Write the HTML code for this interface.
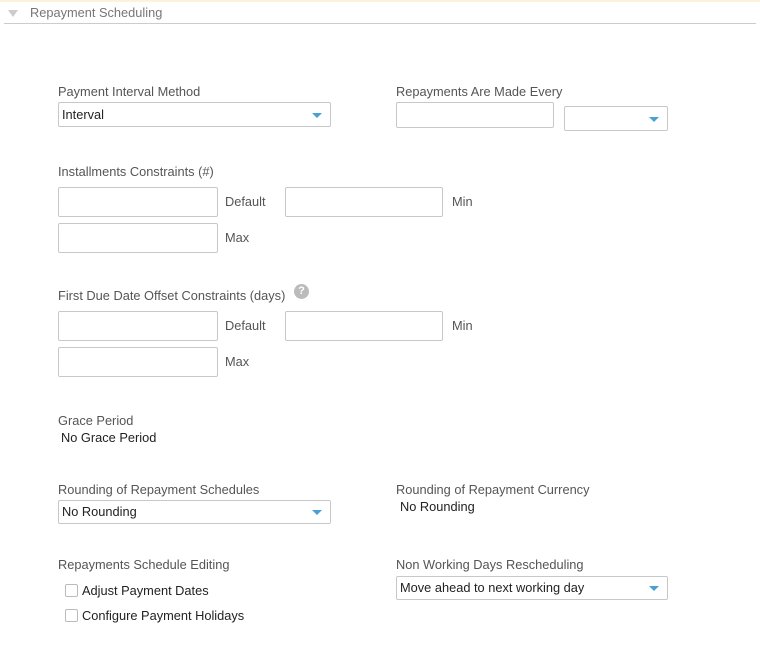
<!DOCTYPE html>
<html><head><meta charset="utf-8"><style>
*{box-sizing:border-box;margin:0;padding:0}
body{width:760px;height:649px;background:#fff;position:relative;overflow:hidden;font-family:"Liberation Sans",sans-serif;font-size:12.8px;color:#222}
.a{position:absolute;white-space:nowrap;line-height:16px}
.l{color:#555}
.b{position:absolute;border:1px solid #c8c8c8;border-radius:2px;background:#fff}
.s::after{content:"";position:absolute;right:8px;top:50%;margin-top:-2px;border-left:5px solid transparent;border-right:5px solid transparent;border-top:5px solid #4a9fd5}
.cb{position:absolute;width:13px;height:13px;border:1px solid #bbb;border-radius:2px;background:#fff}
</style></head><body>
<div style="position:absolute;left:0;top:0;width:760px;height:2px;background:#fdf3dc"></div>
<div style="position:absolute;left:8px;top:10px;border-left:5px solid transparent;border-right:5px solid transparent;border-top:7px solid #ccc"></div>
<div class="a" style="left:30px;top:5px;color:#777">Repayment Scheduling</div>
<div style="position:absolute;left:4px;top:23px;width:752px;height:1px;background:#ccc"></div>

<div class="a l" style="left:58px;top:84px">Payment Interval Method</div>
<div class="b s" style="left:58px;top:102px;width:273px;height:25px"></div>
<div class="a" style="left:62px;top:107px">Interval</div>

<div class="a l" style="left:396px;top:84px">Repayments Are Made Every</div>
<div class="b" style="left:396px;top:102px;width:158px;height:26px"></div>
<div class="b s" style="left:564px;top:106px;width:104px;height:25px"></div>

<div class="a l" style="left:58px;top:164px">Installments Constraints (#)</div>
<div class="b" style="left:58px;top:187px;width:160px;height:30px"></div>
<div class="a l" style="left:225px;top:194px">Default</div>
<div class="b" style="left:285px;top:187px;width:158px;height:30px"></div>
<div class="a l" style="left:452px;top:194px">Min</div>
<div class="b" style="left:58px;top:223px;width:160px;height:30px"></div>
<div class="a l" style="left:225px;top:230px">Max</div>

<div class="a l" style="left:58px;top:288px">First Due Date Offset Constraints (days)</div>
<div style="position:absolute;left:294px;top:284px;width:15px;height:15px;border-radius:50%;background:#bbb;color:#fff;font-weight:bold;font-size:11px;text-align:center;line-height:15px">?</div>
<div class="b" style="left:58px;top:311px;width:160px;height:30px"></div>
<div class="a l" style="left:225px;top:318px">Default</div>
<div class="b" style="left:285px;top:311px;width:158px;height:30px"></div>
<div class="a l" style="left:452px;top:318px">Min</div>
<div class="b" style="left:58px;top:347px;width:160px;height:30px"></div>
<div class="a l" style="left:225px;top:354px">Max</div>

<div class="a l" style="left:58px;top:413px">Grace Period</div>
<div class="a" style="left:61px;top:430px">No Grace Period</div>

<div class="a l" style="left:58px;top:482px">Rounding of Repayment Schedules</div>
<div class="b s" style="left:58px;top:500px;width:273px;height:24px"></div>
<div class="a" style="left:62px;top:504px">No Rounding</div>
<div class="a l" style="left:396px;top:482px">Rounding of Repayment Currency</div>
<div class="a" style="left:400px;top:499px">No Rounding</div>

<div class="a l" style="left:58px;top:557px">Repayments Schedule Editing</div>
<div class="cb" style="left:65px;top:584px"></div>
<div class="a" style="left:82px;top:583px">Adjust Payment Dates</div>
<div class="cb" style="left:65px;top:609px"></div>
<div class="a" style="left:82px;top:608px">Configure Payment Holidays</div>

<div class="a l" style="left:396px;top:557px">Non Working Days Rescheduling</div>
<div class="b s" style="left:396px;top:576px;width:272px;height:24px"></div>
<div class="a" style="left:400px;top:580px">Move ahead to next working day</div>
</body></html>
